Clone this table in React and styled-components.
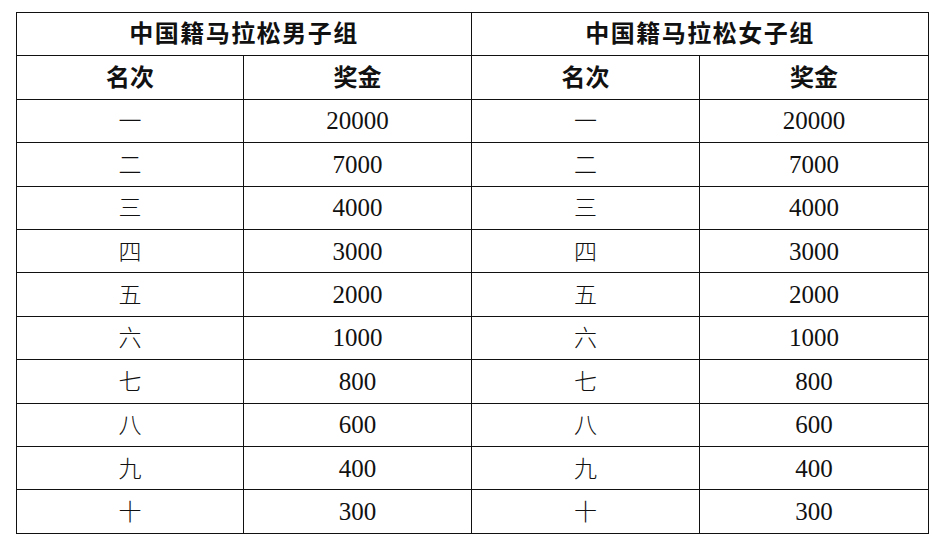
import styled, { createGlobalStyle } from 'styled-components';

const GlobalStyle = createGlobalStyle`
    html, body {
        margin: 0;
        padding: 0;
        background: #ffffff;
    }
`

const Page = styled.div`
    padding: 12px 0 0 16px;
`

const Table = styled.table`
    border-collapse: collapse;
    table-layout: fixed;
    width: 913px;
    font-family: "Liberation Serif", "Noto Sans CJK SC", serif;
    color: #111;
`

const Cell = styled.td`
    border: 1px solid #111;
    height: 42.4px;
    padding: 0;
    text-align: center;
    vertical-align: middle;
    font-size: ${props => props.bold ? '24px' : '25px'};
    line-height: 1;
    font-weight: ${props => props.bold ? 600 : 400};
    letter-spacing: ${props => props.spaced ? '1.5px' : '0'};
`

const Rank = styled.span`
    font-family: "Noto Sans CJK SC", sans-serif;
    font-weight: 300;
    font-size: 23px;
`

const prizes = [
    ['一', '20000'],
    ['二', '7000'],
    ['三', '4000'],
    ['四', '3000'],
    ['五', '2000'],
    ['六', '1000'],
    ['七', '800'],
    ['八', '600'],
    ['九', '400'],
    ['十', '300'],
]

export default function App(){
    return(
        <Page>
            <GlobalStyle />
            <Table>
                <colgroup>
                    <col style={{ width: '227px' }} />
                    <col style={{ width: '228px' }} />
                    <col style={{ width: '228px' }} />
                    <col style={{ width: '229px' }} />
                </colgroup>
                <tbody>
                    <tr>
                        <Cell colSpan={2} bold spaced>中国籍马拉松男子组</Cell>
                        <Cell colSpan={2} bold spaced>中国籍马拉松女子组</Cell>
                    </tr>
                    <tr>
                        <Cell bold>名次</Cell>
                        <Cell bold>奖金</Cell>
                        <Cell bold>名次</Cell>
                        <Cell bold>奖金</Cell>
                    </tr>
                    {prizes.map(([rank, money]) => (
                        <tr key={rank}>
                            <Cell><Rank>{rank}</Rank></Cell>
                            <Cell>{money}</Cell>
                            <Cell><Rank>{rank}</Rank></Cell>
                            <Cell>{money}</Cell>
                        </tr>
                    ))}
                </tbody>
            </Table>
        </Page>
    )
}
